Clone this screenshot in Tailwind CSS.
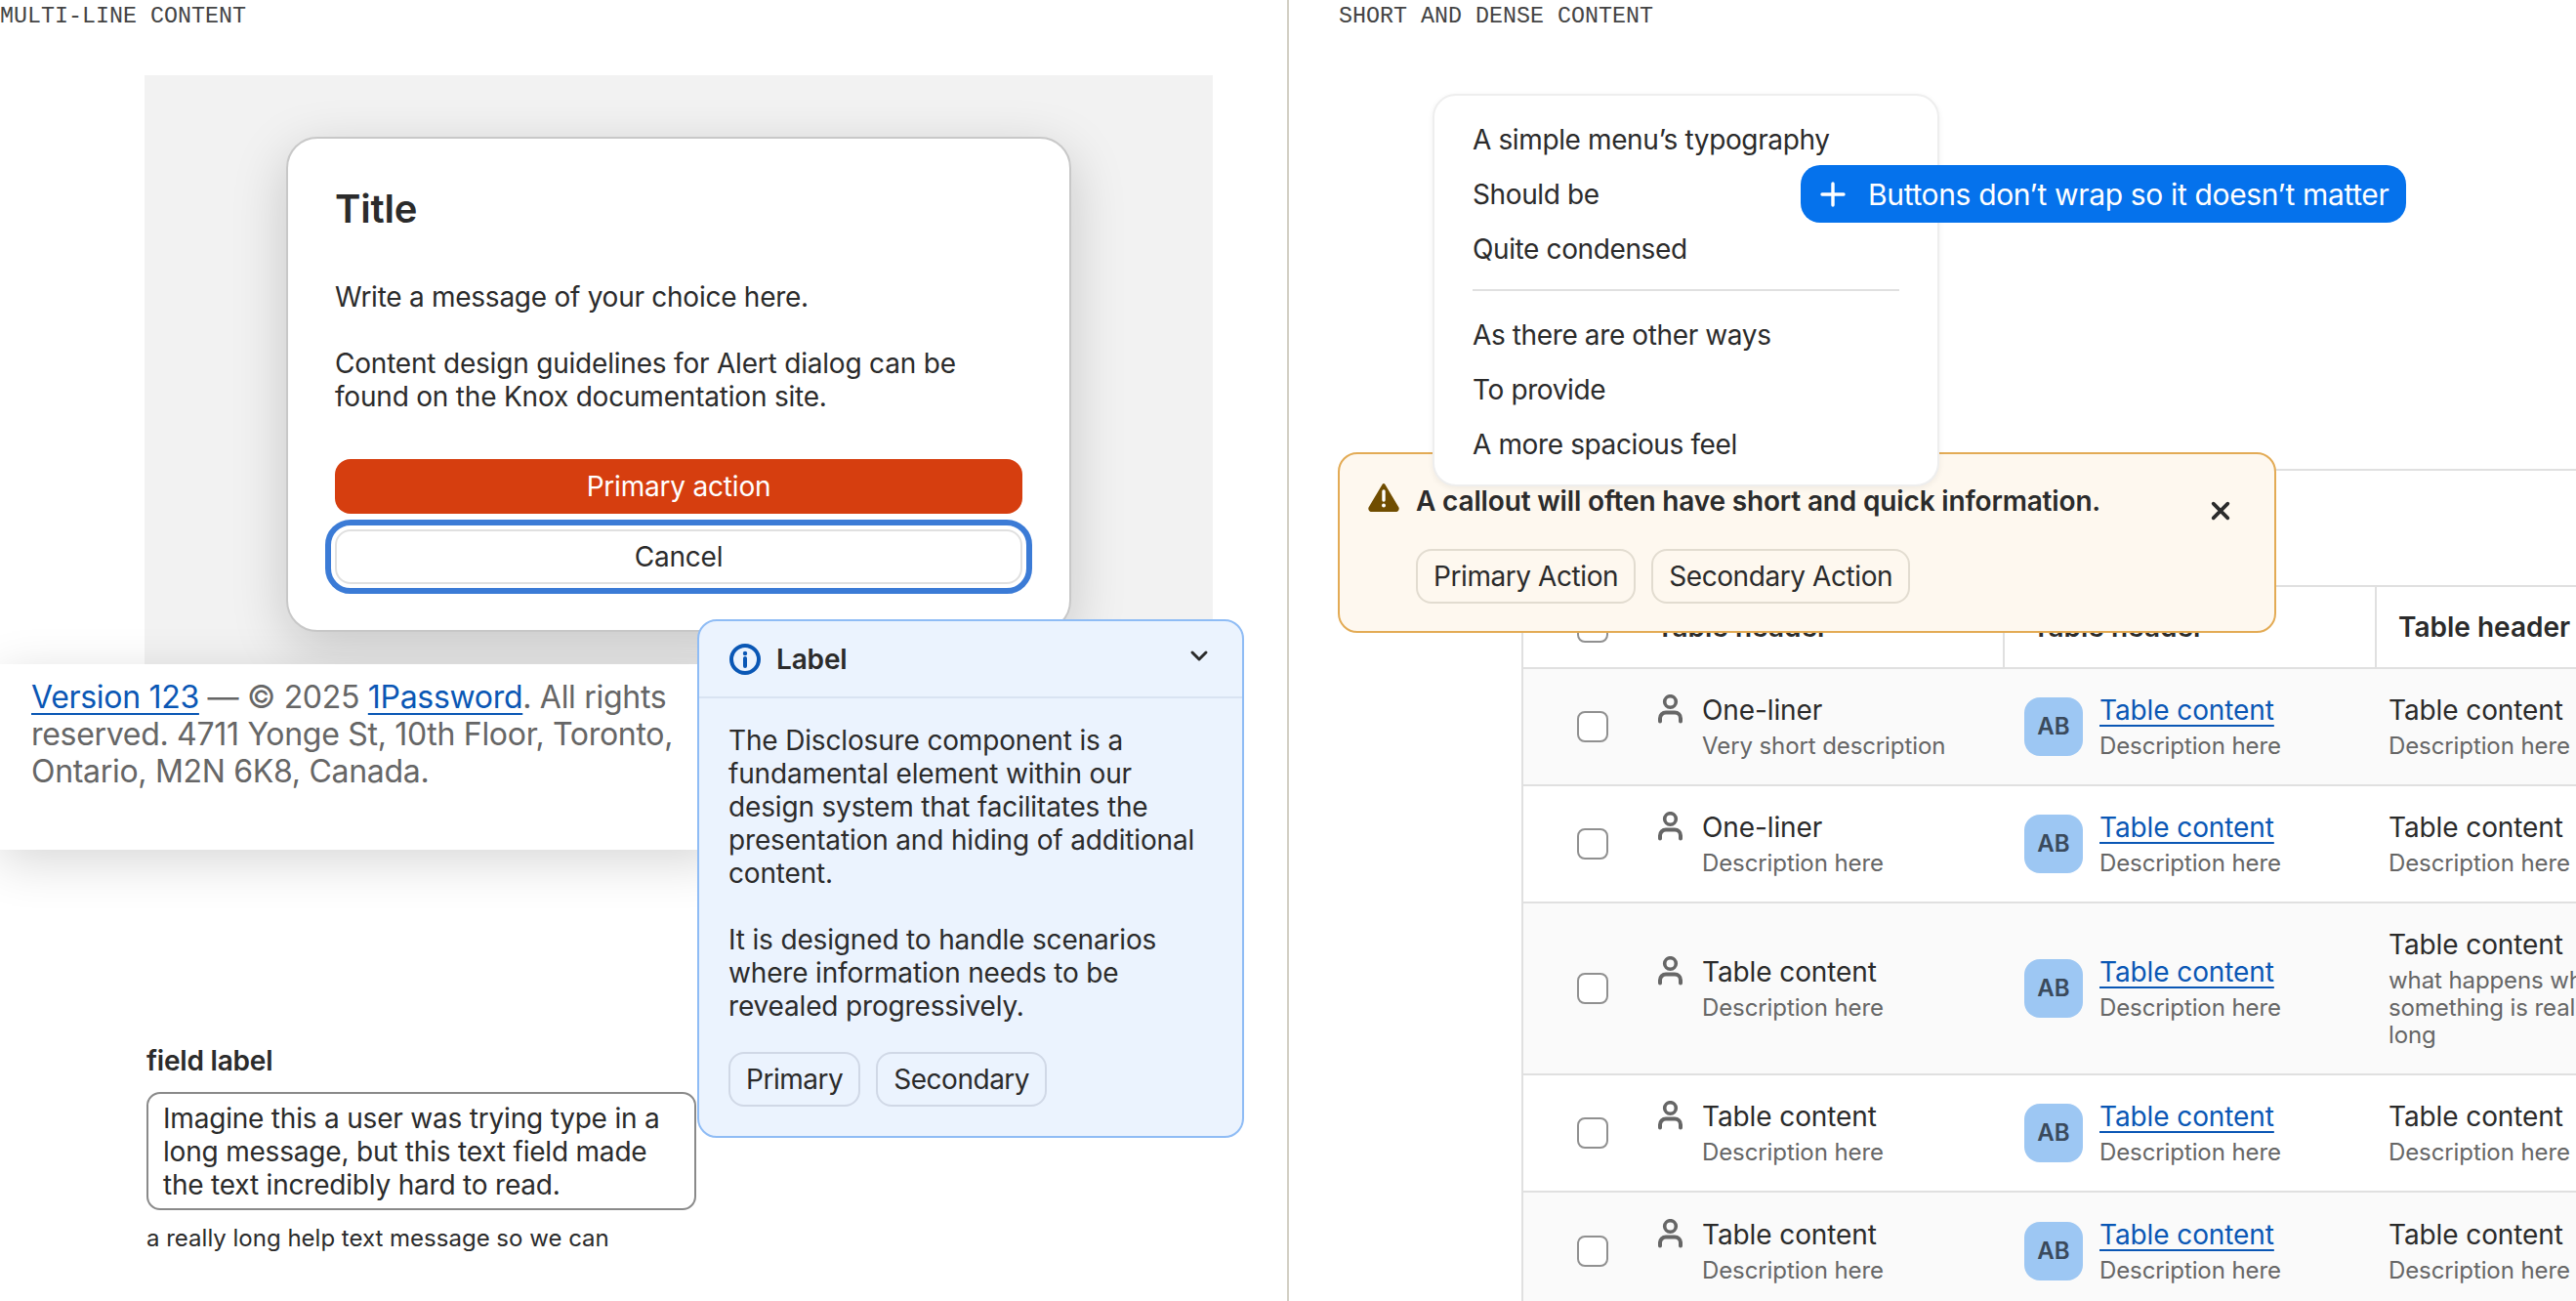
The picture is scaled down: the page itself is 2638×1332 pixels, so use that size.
<!doctype html>
<html><head><meta charset="utf-8"><script src="https://cdn.jsdelivr.net/npm/@tailwindcss/browser@4"></script></head>
<body class="bg-white">
<main class="relative w-[2638px] h-[1332px] overflow-hidden flex font-['Inter',sans-serif] text-[28px] leading-[34px] text-[#2b2b2b]">
  <section class="relative w-[1320px] h-full border-r-2 border-[#d2cfc4] shrink-0">
    <h2 class="absolute left-0 top-[1px] font-['Liberation_Mono',monospace] text-[23.33px] leading-[32px] text-[#444] font-normal">MULTI-LINE CONTENT</h2>
    <div class="absolute left-[148px] top-[77px] w-[1094px] h-[603px] bg-[#f2f2f2]"></div>
    <div class="absolute left-[293px] top-[140px] w-[804px] h-[507px] bg-white border-2 border-[#c8c8c8] rounded-[32px] px-[48px] pt-[46px] shadow-[0_16px_56px_rgba(0,0,0,0.18)] tracking-[-0.2px]">
      <h3 class="text-[40px] leading-[52px] font-semibold tracking-[-0.2px]">Title</h3>
      <p class="mt-[47px] tracking-[-0.26px]">Write a message of your choice here.</p>
      <p class="mt-[34px]">Content design guidelines for Alert dialog can be<br>found on the Knox documentation site.</p>
      <div class="mt-[47px] flex flex-col gap-[16px]">
        <div class="h-[56px] rounded-[16px] bg-[#d63e0f] text-white flex items-center justify-center">Primary action</div>
        <div class="h-[56px] rounded-[16px] bg-white border-2 border-[#e0e0e0] flex items-center justify-center outline-[6px] outline-[#3b7bd6] outline-offset-[4px]">Cancel</div>
      </div>
    </div>
    <div class="absolute left-0 top-[680px] w-[740px] h-[190px] bg-white pl-[32px] pt-[15px] shadow-[0_12px_48px_rgba(0,0,0,0.16)] text-[32px] leading-[38px] text-[#666] tracking-[-0.3px]">
      <p class="w-[690px]"><a class="text-[#0a57b5] underline underline-offset-[5px] decoration-2">Version 123</a> — © 2025 <a class="text-[#0a57b5] underline underline-offset-[5px] decoration-2">1Password</a>. All rights reserved. 4711 Yonge St, 10th Floor, Toronto, Ontario, M2N 6K8, Canada.</p>
    </div>
    <div class="absolute left-[150px] top-[1069px] w-[563px] tracking-[-0.2px]">
      <label class="block font-semibold leading-[34px]">field label</label>
      <div class="mt-[15px] h-[121px] border-2 border-[#8a8a8a] rounded-[14px] pl-[15px] pt-[8px] text-[#2b2b2b]">Imagine this a user was trying type in a<br>long message, but this text field made<br>the text incredibly hard to read.</div>
      <p class="mt-[14px] text-[24px] leading-[30px] tracking-normal">a really long help text message so we can</p>
    </div>
    <div class="absolute left-[714px] top-[634px] w-[560px] h-[531px] bg-[#ebf3fe] border-2 border-[#8fbcf5] rounded-[20px] tracking-[-0.16px]">
      <div class="h-[79px] border-b-2 border-[#d9e3f2] flex items-center pl-[30px] pr-[34px]">
        <svg class="w-[34px] h-[34px]" viewBox="0 0 34 34" fill="none"><circle cx="17" cy="17" r="14" stroke="#0a57b5" stroke-width="4"/><circle cx="17" cy="11" r="2.2" fill="#0a57b5"/><path d="M17 16v8" stroke="#0a57b5" stroke-width="4" stroke-linecap="round"/></svg>
        <span class="ml-[15px] font-semibold">Label</span>
        <svg class="ml-auto w-[20px] h-[14px] -mt-[6px]" viewBox="0 0 20 14" fill="none"><path d="M3 3l7 7 7-7" stroke="#2b2b2b" stroke-width="3" stroke-linecap="round" stroke-linejoin="round"/></svg>
      </div>
      <div class="pl-[30px] pr-[20px] pt-[26px]">
        <p>The Disclosure component is a<br>fundamental element within our<br>design system that facilitates the<br>presentation and hiding of additional<br>content.</p>
        <p class="mt-[34px]">It is designed to handle scenarios<br>where information needs to be<br>revealed progressively.</p>
        <div class="mt-[30px] flex gap-[16px] tracking-[-0.48px]">
          <div class="h-[56px] px-[16px] rounded-[16px] border-2 border-[#d0d8e6] flex items-center">Primary</div>
          <div class="h-[56px] px-[16px] rounded-[16px] border-2 border-[#d0d8e6] flex items-center">Secondary</div>
        </div>
      </div>
    </div>
  </section>
  <section class="relative flex-1 h-full">
    <h2 class="absolute left-[51px] top-[1px] font-['Liberation_Mono',monospace] text-[23.33px] leading-[32px] text-[#444] font-normal">SHORT AND DENSE CONTENT</h2>

    <div class="absolute left-[238px] top-[480px] w-[1200px] border-l-2 border-t-2 border-[#e0e0e0]">
      <div class="h-[117px]"></div>
      <div class="grid grid-cols-[491px_381px_1fr] h-[86px] border-t-2 border-b-2 border-[#e0e0e0] font-semibold items-stretch">
        <div class="flex items-center pl-[55px]"><span class="w-[32px] h-[32px] rounded-[8px] border-2 border-[#909090] bg-white"></span><span class="ml-[49px]">Table header</span></div>
        <div class="flex items-center pl-[28px] border-l-2 border-[#e0e0e0]">Table header</div>
        <div class="flex items-center pl-[22px] border-l-2 border-[#e0e0e0]">Table header</div>
      </div>

      <div class="grid grid-cols-[491px_381px_1fr] h-[120px] bg-[#fafafa] border-b-2 border-[#e0e0e0] items-center">
        <div class="flex items-center pl-[55px]"><span class="w-[32px] h-[32px] rounded-[8px] border-2 border-[#909090] bg-white"></span>
          <div class="flex items-start ml-[51px]"><svg class="w-[25px] h-[30px] mt-[3px]" viewBox="0 0 25 30" fill="none"><circle cx="12.5" cy="7.5" r="5.8" stroke="#666" stroke-width="3.6"/><path d="M2 27.5v-3a6 6 0 0 1 6-6h9a6 6 0 0 1 6 6v3" stroke="#666" stroke-width="4" stroke-linecap="round"/></svg>
            <div class="ml-[20px] pb-[2px] tracking-[-0.1px]"><div class="leading-[38px]">One-liner</div><div class="mt-[4px] text-[24px] leading-[28px] text-[#666]">Very short description</div></div></div></div>
        <div class="flex items-center pl-[22px]"><span class="w-[60px] h-[60px] rounded-[16px] bg-[#9dc7f3] text-[#3a4a5c] text-[24px] font-semibold flex items-center justify-center">AB</span>
          <div class="ml-[17px] pb-[2px] tracking-[-0.1px]"><div class="leading-[38px] text-[#0a57b5] underline underline-offset-[5px] decoration-2">Table content</div><div class="mt-[4px] text-[24px] leading-[28px] text-[#666]">Description here</div></div></div>
        <div class="pl-[14px] pb-[2px] whitespace-nowrap tracking-[-0.1px]"><div class="leading-[38px]">Table content</div><div class="mt-[4px] text-[24px] leading-[28px] text-[#666]">Description here</div></div>
      </div>

      <div class="grid grid-cols-[491px_381px_1fr] h-[120px] bg-white border-b-2 border-[#e0e0e0] items-center">
        <div class="flex items-center pl-[55px]"><span class="w-[32px] h-[32px] rounded-[8px] border-2 border-[#909090] bg-white"></span>
          <div class="flex items-start ml-[51px]"><svg class="w-[25px] h-[30px] mt-[3px]" viewBox="0 0 25 30" fill="none"><circle cx="12.5" cy="7.5" r="5.8" stroke="#666" stroke-width="3.6"/><path d="M2 27.5v-3a6 6 0 0 1 6-6h9a6 6 0 0 1 6 6v3" stroke="#666" stroke-width="4" stroke-linecap="round"/></svg>
            <div class="ml-[20px] pb-[2px] tracking-[-0.1px]"><div class="leading-[38px]">One-liner</div><div class="mt-[4px] text-[24px] leading-[28px] text-[#666]">Description here</div></div></div></div>
        <div class="flex items-center pl-[22px]"><span class="w-[60px] h-[60px] rounded-[16px] bg-[#9dc7f3] text-[#3a4a5c] text-[24px] font-semibold flex items-center justify-center">AB</span>
          <div class="ml-[17px] pb-[2px] tracking-[-0.1px]"><div class="leading-[38px] text-[#0a57b5] underline underline-offset-[5px] decoration-2">Table content</div><div class="mt-[4px] text-[24px] leading-[28px] text-[#666]">Description here</div></div></div>
        <div class="pl-[14px] pb-[2px] whitespace-nowrap tracking-[-0.1px]"><div class="leading-[38px]">Table content</div><div class="mt-[4px] text-[24px] leading-[28px] text-[#666]">Description here</div></div>
      </div>

      <div class="grid grid-cols-[491px_381px_1fr] h-[176px] bg-[#fafafa] border-b-2 border-[#e0e0e0] items-center">
        <div class="flex items-center pl-[55px]"><span class="w-[32px] h-[32px] rounded-[8px] border-2 border-[#909090] bg-white"></span>
          <div class="flex items-start ml-[51px]"><svg class="w-[25px] h-[30px] mt-[3px]" viewBox="0 0 25 30" fill="none"><circle cx="12.5" cy="7.5" r="5.8" stroke="#666" stroke-width="3.6"/><path d="M2 27.5v-3a6 6 0 0 1 6-6h9a6 6 0 0 1 6 6v3" stroke="#666" stroke-width="4" stroke-linecap="round"/></svg>
            <div class="ml-[20px] pb-[2px] tracking-[-0.1px]"><div class="leading-[38px]">Table content</div><div class="mt-[4px] text-[24px] leading-[28px] text-[#666]">Description here</div></div></div></div>
        <div class="flex items-center pl-[22px]"><span class="w-[60px] h-[60px] rounded-[16px] bg-[#9dc7f3] text-[#3a4a5c] text-[24px] font-semibold flex items-center justify-center">AB</span>
          <div class="ml-[17px] pb-[2px] tracking-[-0.1px]"><div class="leading-[38px] text-[#0a57b5] underline underline-offset-[5px] decoration-2">Table content</div><div class="mt-[4px] text-[24px] leading-[28px] text-[#666]">Description here</div></div></div>
        <div class="pl-[14px] pb-[2px] whitespace-nowrap tracking-[-0.1px]"><div class="leading-[38px]">Table content</div><div class="mt-[4px] text-[24px] leading-[28px] text-[#666]">what happens when<br>something is really<br>long</div></div>
      </div>

      <div class="grid grid-cols-[491px_381px_1fr] h-[120px] bg-white border-b-2 border-[#e0e0e0] items-center">
        <div class="flex items-center pl-[55px]"><span class="w-[32px] h-[32px] rounded-[8px] border-2 border-[#909090] bg-white"></span>
          <div class="flex items-start ml-[51px]"><svg class="w-[25px] h-[30px] mt-[3px]" viewBox="0 0 25 30" fill="none"><circle cx="12.5" cy="7.5" r="5.8" stroke="#666" stroke-width="3.6"/><path d="M2 27.5v-3a6 6 0 0 1 6-6h9a6 6 0 0 1 6 6v3" stroke="#666" stroke-width="4" stroke-linecap="round"/></svg>
            <div class="ml-[20px] pb-[2px] tracking-[-0.1px]"><div class="leading-[38px]">Table content</div><div class="mt-[4px] text-[24px] leading-[28px] text-[#666]">Description here</div></div></div></div>
        <div class="flex items-center pl-[22px]"><span class="w-[60px] h-[60px] rounded-[16px] bg-[#9dc7f3] text-[#3a4a5c] text-[24px] font-semibold flex items-center justify-center">AB</span>
          <div class="ml-[17px] pb-[2px] tracking-[-0.1px]"><div class="leading-[38px] text-[#0a57b5] underline underline-offset-[5px] decoration-2">Table content</div><div class="mt-[4px] text-[24px] leading-[28px] text-[#666]">Description here</div></div></div>
        <div class="pl-[14px] pb-[2px] whitespace-nowrap tracking-[-0.1px]"><div class="leading-[38px]">Table content</div><div class="mt-[4px] text-[24px] leading-[28px] text-[#666]">Description here</div></div>
      </div>

      <div class="grid grid-cols-[491px_381px_1fr] h-[120px] bg-[#fafafa] items-center">
        <div class="flex items-center pl-[55px]"><span class="w-[32px] h-[32px] rounded-[8px] border-2 border-[#909090] bg-white"></span>
          <div class="flex items-start ml-[51px]"><svg class="w-[25px] h-[30px] mt-[3px]" viewBox="0 0 25 30" fill="none"><circle cx="12.5" cy="7.5" r="5.8" stroke="#666" stroke-width="3.6"/><path d="M2 27.5v-3a6 6 0 0 1 6-6h9a6 6 0 0 1 6 6v3" stroke="#666" stroke-width="4" stroke-linecap="round"/></svg>
            <div class="ml-[20px] pb-[2px] tracking-[-0.1px]"><div class="leading-[38px]">Table content</div><div class="mt-[4px] text-[24px] leading-[28px] text-[#666]">Description here</div></div></div></div>
        <div class="flex items-center pl-[22px]"><span class="w-[60px] h-[60px] rounded-[16px] bg-[#9dc7f3] text-[#3a4a5c] text-[24px] font-semibold flex items-center justify-center">AB</span>
          <div class="ml-[17px] pb-[2px] tracking-[-0.1px]"><div class="leading-[38px] text-[#0a57b5] underline underline-offset-[5px] decoration-2">Table content</div><div class="mt-[4px] text-[24px] leading-[28px] text-[#666]">Description here</div></div></div>
        <div class="pl-[14px] pb-[2px] whitespace-nowrap tracking-[-0.1px]"><div class="leading-[38px]">Table content</div><div class="mt-[4px] text-[24px] leading-[28px] text-[#666]">Description here</div></div>
      </div>
    </div>

    <div class="absolute left-[50px] top-[463px] w-[961px] h-[185px] bg-[#fef8ef] border-2 border-[#e3ab55] rounded-[20px]">
      <div class="flex items-start pl-[29px] pt-[29px]">
        <svg class="w-[32px] h-[30px] shrink-0" viewBox="0 0 32 30"><path d="M16 2.5 L30 26 a1.8 1.8 0 0 1 -1.6 2.6 H3.6 A1.8 1.8 0 0 1 2 26 Z" fill="#704d00" stroke="#704d00" stroke-width="3" stroke-linejoin="round"/><path d="M16 9v9" stroke="#fff" stroke-width="3.4" stroke-linecap="round"/><circle cx="16" cy="23.5" r="2" fill="#fff"/></svg>
        <span class="ml-[17px] font-semibold -mt-[1px] leading-[40px] tracking-[-0.16px]">A callout will often have short and quick information.</span>
      </div>
      <svg class="absolute left-[891px] top-[47px] w-[22px] h-[22px]" viewBox="0 0 24 24" fill="none"><path d="M4 4l16 16M20 4L4 20" stroke="#2b2b2b" stroke-width="4" stroke-linecap="round"/></svg>
      <div class="absolute left-[78px] top-[97px] flex gap-[16px] tracking-[-0.42px]">
        <div class="h-[56px] px-[16px] rounded-[16px] border-2 border-[#e2dcd0] flex items-center">Primary Action</div>
        <div class="h-[56px] px-[16px] rounded-[16px] border-2 border-[#e2dcd0] flex items-center">Secondary Action</div>
      </div>
    </div>

    <div class="absolute left-[147px] top-[96px] w-[519px] h-[402px] bg-white border-2 border-[#eeeeee] rounded-[24px] pt-[17px] shadow-[0_2px_6px_rgba(0,0,0,0.06)] tracking-[-0.38px]">
      <ul class="pl-[39px] pr-[40px]">
        <li class="h-[56px] flex items-center">A simple menu’s typography</li>
        <li class="h-[56px] flex items-center">Should be</li>
        <li class="h-[56px] flex items-center">Quite condensed</li>
      </ul>
      <div class="mx-[39px] mt-[13px] mb-[17px] h-[2px] bg-[#e0e0e0]"></div>
      <ul class="pl-[39px] pr-[40px]">
        <li class="h-[56px] flex items-center">As there are other ways</li>
        <li class="h-[56px] flex items-center">To provide</li>
        <li class="h-[56px] flex items-center">A more spacious feel</li>
      </ul>
    </div>

    <div class="absolute left-[524px] top-[169px] w-[620px] h-[59px] rounded-[20px] bg-[#0572ec] text-white text-[30px] flex items-center pl-[20px] whitespace-nowrap tracking-[-0.35px]">
      <svg class="w-[26px] h-[26px] shrink-0" viewBox="0 0 26 26" fill="none"><path d="M13 2v22M2 13h22" stroke="#fff" stroke-width="3.4" stroke-linecap="round"/></svg>
      <span class="ml-[23px]">Buttons don’t wrap so it doesn’t matter</span>
    </div>
  </section>
</main>
</body></html>
